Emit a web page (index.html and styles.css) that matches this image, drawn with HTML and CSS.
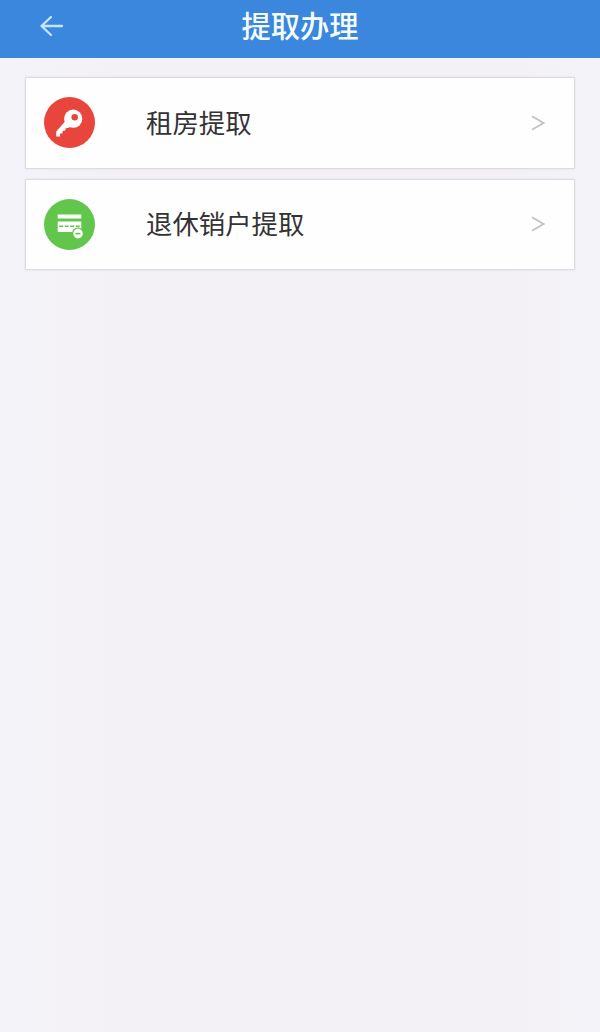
FILE: index.html
```
<!DOCTYPE html>
<html lang="zh-CN">

<head>
    <meta charset="UTF-8">
    <meta name="viewport" content="width=device-width, initial-scale=1.0">
    <title>提取办理</title>
    <link rel="stylesheet" href="styles.css">
</head>

<body>
    <header>
        <a class="back" href="#" aria-label="返回">
            <svg width="26" height="24" viewBox="0 0 26 24">
                <path d="M12 3 L2.5 12 L12 21 M2.5 12 H23" />
            </svg>
        </a>
        <h1>提取办理</h1>
    </header>

    <main class="menu">
        <a class="item" href="#">
            <svg class="icon" viewBox="0 0 51 51">
                <circle cx="25.5" cy="25.5" r="25.5" fill="#e8453c" />
                <path d="M22 23.5 L12.2 34.6 V39.6 H16 V36.6 L18.3 36.4 L18.8 34 L21.2 33.6 L21.8 31.3 L24.5 30.8 L29 28 Z" fill="#fff" />
                <circle cx="29.2" cy="21.7" r="9.1" fill="#fff" />
                <circle cx="30.7" cy="20.2" r="3.2" fill="#e8453c" />
            </svg>
            <span class="label">租房提取</span>
            <svg class="arrow" width="14" height="16" viewBox="0 0 14 16">
                <path d="M1 1.2 L12.5 8 L1 14.8" />
            </svg>
        </a>

        <a class="item" href="#">
            <svg class="icon" viewBox="0 0 51 51">
                <circle cx="25.5" cy="25.5" r="25.5" fill="#62c64c" />
                <path d="M13.7 15.5 H37.3 V19.4 H13.7 Z M13.7 22.5 H37.3 V32.9 H13.7 Z" fill="#fff" />
                <path d="M15.2 27.3 H37.3" stroke="#62c64c" stroke-width="1.5" stroke-dasharray="4 1.5" />
                <circle cx="34" cy="34.6" r="6.2" fill="#62c64c" />
                <circle cx="34" cy="34.6" r="4.8" fill="#fff" />
                <path d="M31.6 34.6 H36.4" stroke="#62c64c" stroke-width="1.6" />
            </svg>
            <span class="label">退休销户提取</span>
            <svg class="arrow" width="14" height="16" viewBox="0 0 14 16">
                <path d="M1 1.2 L12.5 8 L1 14.8" />
            </svg>
        </a>
    </main>
</body>

</html>
```
FILE: styles.css
```
body {
    margin: 0;
    min-height: 100vh;
    font-family: "Noto Sans CJK SC", sans-serif;
    color: #333;
    background: linear-gradient(to right, #f4f3f9, #f3f1f5 20%, #f3f1f5 85%, #f4f3f9);
}

header {
    display: grid;
    grid-template-columns: 80px 1fr 80px;
    align-items: center;
    box-sizing: border-box;
    height: 58px;
    padding-bottom: 6px;
    background-color: #3a87dd;
}

.back {
    display: flex;
    padding-left: 39px;
}

.back path {
    fill: none;
    stroke: #c4e6fd;
    stroke-width: 2.3;
    stroke-linecap: round;
    stroke-linejoin: round;
}

h1 {
    margin: 0;
    padding-bottom: 4px;
    font-size: 29.3px;
    font-weight: 500;
    line-height: 48px;
    text-align: center;
    color: #f4fcff;
}

.menu {
    display: flex;
    flex-direction: column;
    gap: 10px;
    padding: 19px 25px;
}

.item {
    display: flex;
    align-items: center;
    box-sizing: border-box;
    height: 91.5px;
    padding: 0 29px 0 18px;
    border: 1px solid #dddce0;
    border-radius: 1px;
    background-color: #fefeff;
    box-shadow: 0 0 2px rgba(0, 0, 0, 0.12);
    color: inherit;
    text-decoration: none;
}

.icon {
    width: 51px;
    height: 51px;
}

.label {
    flex: 1;
    margin-left: 51px;
    padding-bottom: 2px;
    font-size: 26.4px;
    line-height: 40px;
}

.arrow path {
    fill: none;
    stroke: #c3c2c5;
    stroke-width: 1.9;
}
```
